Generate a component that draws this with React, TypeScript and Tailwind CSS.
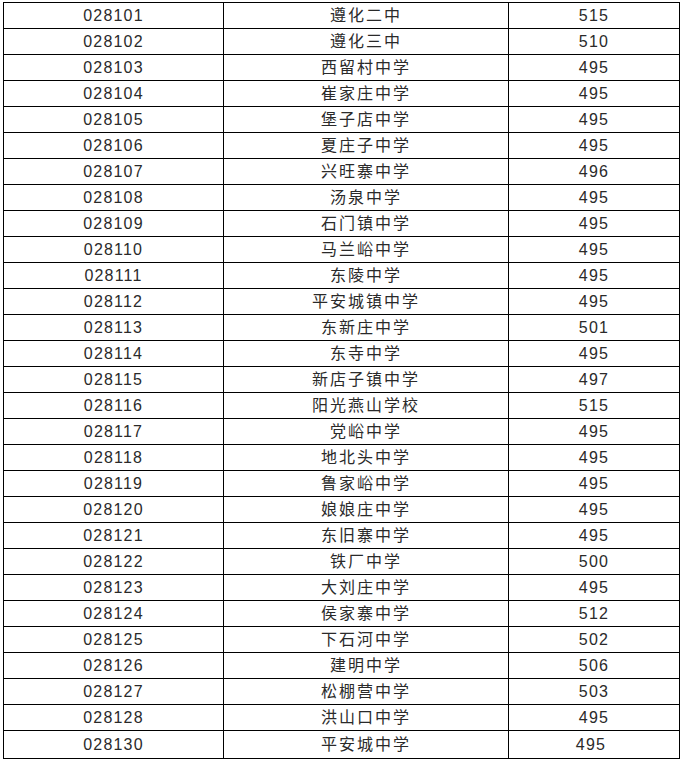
import React from "react";

const rows: [string, string, string][] = [
  ["028101", "遵化二中", "515"],
  ["028102", "遵化三中", "510"],
  ["028103", "西留村中学", "495"],
  ["028104", "崔家庄中学", "495"],
  ["028105", "堡子店中学", "495"],
  ["028106", "夏庄子中学", "495"],
  ["028107", "兴旺寨中学", "496"],
  ["028108", "汤泉中学", "495"],
  ["028109", "石门镇中学", "495"],
  ["028110", "马兰峪中学", "495"],
  ["028111", "东陵中学", "495"],
  ["028112", "平安城镇中学", "495"],
  ["028113", "东新庄中学", "501"],
  ["028114", "东寺中学", "495"],
  ["028115", "新店子镇中学", "497"],
  ["028116", "阳光燕山学校", "515"],
  ["028117", "党峪中学", "495"],
  ["028118", "地北头中学", "495"],
  ["028119", "鲁家峪中学", "495"],
  ["028120", "娘娘庄中学", "495"],
  ["028121", "东旧寨中学", "495"],
  ["028122", "铁厂中学", "500"],
  ["028123", "大刘庄中学", "495"],
  ["028124", "侯家寨中学", "512"],
  ["028125", "下石河中学", "502"],
  ["028126", "建明中学", "506"],
  ["028127", "松棚营中学", "503"],
  ["028128", "洪山口中学", "495"],
  ["028130", "平安城中学", "495"],
];

export default function App() {
  return (
    <div className="w-[683px] h-[763px] bg-white pt-[2px] pl-[3px] text-[#2a2a2a]">
      <div className="w-[677px] border-t border-l border-black">
        {rows.map(([code, name, score], i) => {
          const last = i === rows.length - 1;
          return (
            <div
              key={code}
              className={`flex border-b border-black ${last ? "h-[28px]" : "h-[26px]"}`}
            >
              <div className="w-[220px] border-r border-black flex items-center justify-center text-[16px] tracking-[1.2px] font-['Liberation_Sans',Arial,sans-serif]">
                {code}
              </div>
              <div className="w-[285px] border-r border-black flex items-center justify-center pb-[3px] text-[16px] leading-none tracking-[2px] font-['Noto_Sans_CJK_SC',sans-serif]">
                {name}
              </div>
              <div
                className={`w-[171px] border-r border-black flex items-center justify-center text-[16px] tracking-[1.2px] font-['Liberation_Sans',Arial,sans-serif] ${last ? "pr-[6px]" : ""}`}
              >
                {score}
              </div>
            </div>
          );
        })}
      </div>
    </div>
  );
}
